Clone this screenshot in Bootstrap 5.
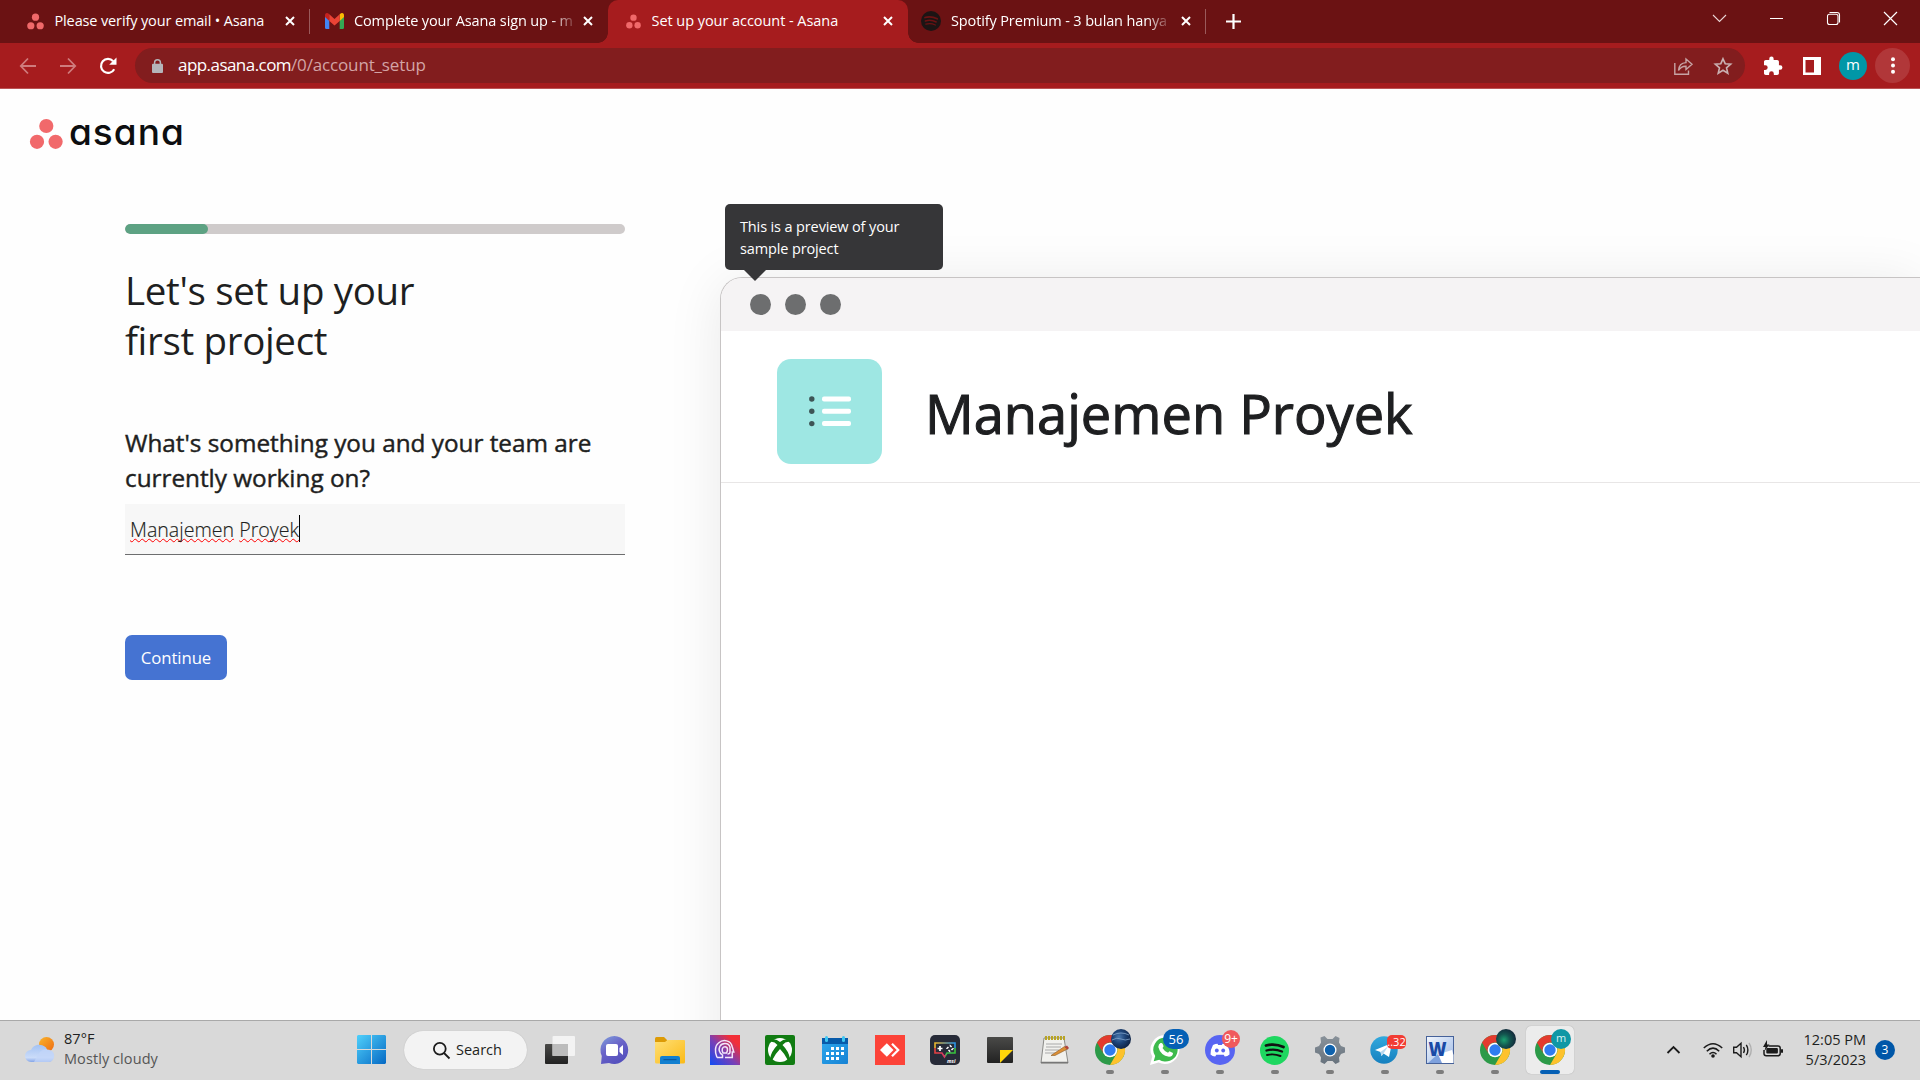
<!DOCTYPE html>
<html lang="en">
<head>
<meta charset="utf-8">
<title>Set up your account - Asana</title>
<link href="https://cdn.jsdelivr.net/npm/bootstrap@5.3.0/dist/css/bootstrap.min.css" rel="stylesheet">
<style>
html, body { height: 100%; }
body { width: 1920px; height: 1080px; overflow: hidden; font-family: "Open Sans", "Noto Sans", sans-serif; color: #1e1f21; background: #fefefe; }
svg { display: block; flex: none; overflow: visible; }
.tx { white-space: nowrap; }

/* browser chrome */
.tabstrip { height: 43px; background: #6b1213; color: #fff; font-size: 14.5px; }
.btab { height: 43px; flex: none; position: relative; }
.btab .ttl { line-height: 41.5px; height: 43px; overflow: hidden; white-space: nowrap; letter-spacing: -.13px; }
.btab.tab-on .ttl { letter-spacing: -.05px; }
.btab.fade-end .ttl { -webkit-mask-image: linear-gradient(90deg, #000 90%, transparent 102%); }
.tab-on { background: #a61c1e; border-radius: 10px 10px 0 0; }
.tab-on::before, .tab-on::after { content: ""; position: absolute; bottom: 0; width: 10px; height: 10px; }
.tab-on::before { left: -10px; background: radial-gradient(circle at 0 0, transparent 9.5px, #a61c1e 10px); }
.tab-on::after { right: -10px; background: radial-gradient(circle at 100% 0, transparent 9.5px, #a61c1e 10px); }
.tsep { width: 1px; height: 25px; margin-top: 9px; background: #9a5a5b; flex: none; }
.winctl { margin: 12px 23px 0 0; gap: 44px; }
.toolbar { height: 46px; background: #a61c1e; border-bottom: 1px solid #bb5455; }
.omni { width: 1610px; height: 35px; border-radius: 18px; background: #821d1e; color: #fff; font-size: 17px; }
.omni .addr { margin: -1px 0 0 15px; letter-spacing: -.55px; }
.omni .dim { color: #d3a4a5; letter-spacing: -.15px; }
.ava { width: 28px; height: 28px; border-radius: 50%; background: #0097a7; color: #fff; font-size: 15px; line-height: 25px; text-align: center; }
.menu-btn { width: 35px; height: 35px; border-radius: 50%; background: #b13739; }

/* page */
.stage { height: 931px; overflow: hidden; }
.side { width: 720px; flex: none; }
.logo { padding: 30px 0 0 30px; height: 135px; }
.word { font-family: Inter, sans-serif; font-feature-settings: "cv11"; font-weight: 500; font-size: 37px; line-height: 40px; letter-spacing: 1px; color: #0d0e10; margin: -7px 0 0 6px; }
.setup { width: 500px; margin-left: 125px; }
.setup .progress { height: 10px; background: #cfcbcb; border-radius: 5px; }
.setup .progress-bar { background: #5da283; border-radius: 5px; }
.setup h1 { font-size: 38.5px; line-height: 50px; font-weight: 400; letter-spacing: -.33px; margin: 31px 0 0; }
.setup label { font-size: 24.3px; line-height: 35px; font-weight: 400; -webkit-text-stroke: .45px; margin-top: 60px; }
.answer { height: 51px; background: #f7f7f7; border-bottom: 1px solid #6d6e6f; margin-top: 9px; padding: 12px 0 0 5px; font-size: 19.6px; line-height: 28px; font-weight: 300; -webkit-text-stroke: .15px; }
.misspelt { text-decoration: underline wavy #f00 1px; text-underline-offset: 1px; text-decoration-skip-ink: none; }
.caret { width: 1px; height: 27px; background: #000; margin-top: -1px; }
.go, .go:hover { margin-top: 80px; width: 102px; height: 45px; background: #4573d2; color: #fff; border: 0; border-radius: 7px; font-size: 16.8px; line-height: 46px; padding: 0; letter-spacing: -.1px; }
.preview { margin-top: 188px; height: 800px; border: 1px solid #c7c4c4; border-right: 0; border-radius: 22px 0 0 0; background: #fff; box-shadow: 0 5px 55px rgba(0,0,0,.085); }
.pbar { height: 53px; background: #f5f3f4; border-radius: 21px 0 0 0; padding-left: 28.5px; gap: 14px; }
.pdot { width: 21px; height: 21px; border-radius: 50%; background: #6d6e6f; }
.phead { height: 152px; border-bottom: 1px solid #e8e6e6; padding-left: 56px; }
.ptile { width: 105px; height: 105px; border-radius: 14px; background: #9ee7e3; margin-top: 10px; }
.pname { font-size: 54.2px; font-weight: 400; -webkit-text-stroke: 1.1px; line-height: 70px; margin: 12px 0 0 43px; }
.tip { position: absolute; left: 4px; top: -74px; width: 218px; height: 66px; background: #363638; border-radius: 5px; color: #fff; font-size: 14.5px; letter-spacing: -.13px; line-height: 22px; padding: 12px 0 0 15px; }
.tip::after { content: ""; position: absolute; left: 18px; top: 65px; border: 12px solid transparent; border-top: 12px solid #363638; border-bottom: 0; }

/* taskbar */
.taskbar { height: 60px; padding-bottom: 1px; background: #d9d9d9; border-top: 1px solid #a9a9a9; font-size: 14.5px; line-height: 20px; }
.pill { width: 123px; height: 38px; border-radius: 19px; background: #f3f3f3; box-shadow: 0 0 1px #aaa; }
.weather { margin: -2px 0 0 8px; width: 284px; letter-spacing: .08px; }
.clock { width: 83px; margin-top: -1px; }
.cell { width: 55px; height: 58px; position: relative; flex: none; }
.cell.run::after { content: ""; position: absolute; left: 23.5px; top: 49px; width: 8px; height: 4px; border-radius: 2px; background: #7d7d7d; }
.cell.live::before { content: ""; position: absolute; left: 3.5px; top: 5px; width: 48px; height: 48px; border-radius: 5px; background: #ececec; box-shadow: 0 0 1px #999; }
.cell.live::after { left: 17.5px; width: 20px; background: #0560b5; }
.cell svg { position: relative; }
.cell svg text, .bdg { font-family: "Open Sans", sans-serif; }
.bdg { width: 20px; height: 20px; border-radius: 50%; background: #0057a8; color: #fff; font-size: 12px; line-height: 19px; text-align: center; }
</style>
</head>
<body class="d-flex flex-column">

<svg width="0" height="0" class="position-absolute">
  <defs>
    <g id="asana"><circle cx="8" cy="3.9" r="3.4"/><circle cx="3.6" cy="12" r="3.4"/><circle cx="12.4" cy="12" r="3.4"/></g>
    <path id="xx" d="M1 1L9 9M9 1L1 9" stroke="#fff" stroke-width="2" fill="none"/>
    <g id="chrome">
      <circle cx="15" cy="15" r="15" fill="#2c9a48"/>
      <path d="M2 7.5A15 15 0 0 1 28 7.5H15A7.5 7.5 0 0 0 8.5 18.7Z" fill="#e33b2e"/>
      <path d="M28 7.5A15 15 0 0 1 15 30L21.5 18.7A7.5 7.5 0 0 0 15 7.5Z" fill="#fdc22c"/>
      <circle cx="15" cy="15" r="7.3" fill="#fff"/><circle cx="15" cy="15" r="5.7" fill="#2f7cf0"/>
    </g>
    <linearGradient id="gwin" x1="0" y1="0" x2="1" y2="1"><stop offset="0" stop-color="#4fd0fb"/><stop offset="1" stop-color="#0669c4"/></linearGradient>
    <linearGradient id="gsun" x1="0" y1="0" x2="1" y2="1"><stop offset="0" stop-color="#f9b52c"/><stop offset="1" stop-color="#ee6a12"/></linearGradient>
    <linearGradient id="gcl" x1="0" y1="0" x2="0" y2="1"><stop offset="0" stop-color="#a3c2f3"/><stop offset=".75" stop-color="#cbdcf9"/><stop offset="1" stop-color="#85a6e8"/></linearGradient>
    <linearGradient id="gdark" x1="0" y1="0" x2="0" y2="1"><stop offset="0" stop-color="#4a4a48"/><stop offset="1" stop-color="#222"/></linearGradient>
    <linearGradient id="gchat" x1="0" y1="0" x2=".6" y2="1"><stop offset="0" stop-color="#7fa0dc"/><stop offset=".5" stop-color="#6a63c8"/><stop offset="1" stop-color="#5450bd"/></linearGradient>
    <linearGradient id="gfold" x1="0" y1="0" x2="1" y2="1"><stop offset="0" stop-color="#ffdf75"/><stop offset="1" stop-color="#fbba16"/></linearGradient>
    <linearGradient id="ghead" x1="0" y1="1" x2="1" y2="0"><stop offset="0" stop-color="#0f4cf5"/><stop offset=".45" stop-color="#7a3fb5"/><stop offset=".8" stop-color="#f22f38"/></linearGradient>
    <linearGradient id="gcal" x1="0" y1="0" x2="1" y2="1"><stop offset="0" stop-color="#2ea9ee"/><stop offset="1" stop-color="#1682d4"/></linearGradient>
    <linearGradient id="gmsi" x1="0" y1="0" x2="1" y2="0"><stop offset="0" stop-color="#e5413f"/><stop offset=".5" stop-color="#d43a68"/><stop offset=".55" stop-color="#3ac04e"/><stop offset="1" stop-color="#38c23b"/></linearGradient>
    <linearGradient id="gmsit" x1="0" y1="0" x2="1" y2="0"><stop offset="0" stop-color="#ecb52c"/><stop offset="1" stop-color="#2794e8"/></linearGradient>
    <linearGradient id="gtg" x1="0" y1="0" x2="0" y2="1"><stop offset="0" stop-color="#32a9dd"/><stop offset="1" stop-color="#1580bf"/></linearGradient>
    <linearGradient id="gset" x1="0" y1="-15" x2="0" y2="15" gradientUnits="userSpaceOnUse"><stop offset="0" stop-color="#8a939b"/><stop offset="1" stop-color="#66717c"/></linearGradient>
    <linearGradient id="gword" x1="0" y1="0" x2="1" y2="1"><stop offset="0" stop-color="#f3f7fd"/><stop offset="1" stop-color="#9db9e6"/></linearGradient>
    <radialGradient id="gaur" cx=".4" cy=".55" r=".6"><stop offset="0" stop-color="#1ba070"/><stop offset=".5" stop-color="#13554f"/><stop offset="1" stop-color="#12283a"/></radialGradient>
    <radialGradient id="gsea" cx=".4" cy=".4" r=".7"><stop offset="0" stop-color="#4a79b0"/><stop offset=".45" stop-color="#1c4377"/><stop offset="1" stop-color="#0b1b38"/></radialGradient>
  </defs>
</svg>

<!-- tab strip -->
<header class="tabstrip d-flex flex-shrink-0">
  <div class="btab d-flex" style="width:309px">
    <svg width="17" height="17" viewBox="0 0 16 16" fill="#f0696a" style="margin:13px 11px 0 26.5px"><use href="#asana"/></svg>
    <div class="ttl" style="width:229px">Please verify your email • Asana</div>
    <svg width="10" height="10" style="margin:16px 0 0 1.5px"><use href="#xx"/></svg>
  </div>
  <div class="tsep"></div>
  <div class="btab fade-end d-flex" style="width:298px">
    <svg width="19" height="16" viewBox="0 0 19 14" preserveAspectRatio="none" style="margin:13px 10px 0 15px"><path d="M0 2V13Q0 14 1 14H4.3V5.5Z" fill="#4285f4"/><path d="M19 2V13Q19 14 18 14H14.7V5.5Z" fill="#34a853"/><path d="M14.7 1.2V7L19 3.6V2A2 2 0 0 0 16 .3Z" fill="#fbbc04"/><path d="M4.3 1.2V7L0 3.6V2A2 2 0 0 1 3 .3Z" fill="#c5221f"/><path d="M4.3 1.2L9.5 5.2L14.7 1.2V7L9.5 11L4.3 7Z" fill="#ea4335"/></svg>
    <div class="ttl" style="width:220px">Complete your Asana sign up - m</div>
    <svg width="10" height="10" style="margin:16px 0 0 9px"><use href="#xx"/></svg>
  </div>
  <div class="btab tab-on d-flex" style="width:299.500px">
    <svg width="15" height="15" viewBox="0 0 16 16" fill="#f0696a" style="margin:14px 11px 0 17.500px"><use href="#asana"/></svg>
    <div class="ttl" style="width:225px">Set up your account - Asana</div>
    <svg width="10" height="10" style="margin:16px 0 0 6px"><use href="#xx"/></svg>
  </div>
  <div class="btab fade-end d-flex" style="width:297.500px">
    <svg width="20" height="20" style="margin:11px 10px 0 13.500px" fill="none" stroke="#6b1213" stroke-linecap="round"><circle cx="10" cy="10" r="10" fill="#1c1414" stroke="none"/><path d="M4 6.500Q10 4.600 16.200 7.800" stroke-width="1.800"/><path d="M4.400 10Q10 8.300 15.200 11" stroke-width="1.500"/><path d="M4.800 13.200Q9.800 11.900 14.300 14" stroke-width="1.300"/></svg>
    <div class="ttl" style="width:217px">Spotify Premium - 3 bulan hanya</div>
    <svg width="10" height="10" style="margin:16px 0 0 13px"><use href="#xx"/></svg>
  </div>
  <div class="tsep"></div>
  <svg width="15" height="15" style="margin:14px 0 0 20px" stroke="#fff" stroke-width="2.200"><path d="M7.500 0V15M0 7.500H15"/></svg>
  <div class="winctl ms-auto d-flex">
    <svg width="13" height="13" fill="none" stroke="#ead6d6" stroke-width="1.100"><path d="M0 3L6.500 9.500L13 3"/></svg>
    <svg width="13" height="13" stroke="#fff"><path d="M0 6.500H13"/></svg>
    <svg width="13" height="13" fill="none" stroke="#fff" stroke-width="1.100"><rect x=".5" y="2.300" width="10.500" height="10.200" rx="2"/><path d="M2.500 .5H10A2.500 2.500 0 0 1 12.500 3V10.500"/></svg>
    <svg width="13" height="13" stroke="#fff" stroke-width="1.200"><path d="M0 0L13 13M13 0L0 13"/></svg>
  </div>
</header>

<!-- toolbar -->
<nav class="toolbar d-flex align-items-center flex-shrink-0">
  <svg width="16" height="16" style="margin-left:19.500px" fill="none" stroke="#cf7c7d" stroke-width="1.800"><path d="M16 8H1M8 .5L.8 8L8 15.500"/></svg>
  <svg width="16" height="16" style="margin-left:24px" fill="none" stroke="#cf7c7d" stroke-width="1.800"><path d="M0 8H15M8 .5L15.200 8L8 15.500"/></svg>
  <svg width="18" height="18" style="margin-left:23.500px" viewBox="0 0 18 18"><path d="M15.200 12.200A7 7 0 1 1 14.200 4.200" fill="none" stroke="#fff" stroke-width="2.200"/><path d="M17.500 .5V7.800H10.200Z" fill="#fff"/></svg>
  <div class="omni d-flex align-items-center" style="margin-left:18px">
    <svg width="11" height="14" style="margin-left:17px"><rect y="4.800" width="11" height="9.200" rx="1" fill="#b5b5ba"/><path d="M2.600 5.500V3.600A2.900 2.900 0 0 1 8.400 3.600V5.500" fill="none" stroke="#b5b5ba" stroke-width="1.500"/></svg>
    <span class="addr tx">app.asana.com<span class="dim">/0/account_setup</span></span>
    <svg class="ms-auto" width="19" height="18" fill="none" stroke="#c6a3a4" stroke-width="1.400"><path d="M.8 6V17.200H14.500V13.500"/><path d="M4.500 13.500Q5 6 12 5.600V2L18 7.300L12 12.500V9.200Q7 9 4.500 13.500Z"/></svg>
    <svg width="18" height="18" viewBox="0 0 18 18" style="margin:0 13.500px 0 20.500px" fill="none" stroke="#c9b0b1" stroke-width="1.600"><path d="M9 1.800L11.200 6.700L16.700 7.200L12.500 10.800L13.800 16.200L9 13.300L4.200 16.200L5.500 10.800L1.300 7.200L6.800 6.700Z"/></svg>
  </div>
  <svg width="18" height="18" viewBox="2 1.500 20.500 20.500" style="margin-left:19px" fill="#fff"><path d="M20.500 11H19V7c0-1.100-.9-2-2-2h-4V3.500a2.500 2.500 0 0 0-5 0V5H4c-1.100 0-2 .9-2 2v3.800h1.500a2.700 2.700 0 0 1 0 5.400H2V20c0 1.100.9 2 2 2h3.800v-1.500a2.700 2.700 0 0 1 5.400 0V22H17c1.100 0 2-.9 2-2v-4h1.500a2.500 2.500 0 0 0 0-5z"/></svg>
  <svg width="18" height="18" style="margin-left:21px"><path fill="#fff" fill-rule="evenodd" d="M0 0H18V18H0ZM2.500 3V15.500H11V3Z"/></svg>
  <div class="ava" style="margin-left:18px">m</div>
  <div class="menu-btn d-flex align-items-center justify-content-center" style="margin-left:8px"><svg width="4" height="17" fill="#fff"><circle cx="2" cy="2.200" r="2"/><circle cx="2" cy="8.500" r="2"/><circle cx="2" cy="14.800" r="2"/></svg></div>
</nav>

<!-- page -->
<main class="stage d-flex flex-shrink-0">
  <section class="side">
    <div class="logo d-flex">
      <svg width="33" height="31" fill="#f1696b"><circle cx="16.300" cy="7" r="7.100"/><circle cx="7" cy="22.800" r="7.100"/><circle cx="25.600" cy="22.800" r="7.100"/></svg>
      <span class="word">asana</span>
    </div>
    <div class="setup">
      <div class="progress"><div class="progress-bar" style="width:16.6%"></div></div>
      <h1>Let's set up your<br>first project</h1>
      <label class="d-block">What's something you and your team are<br>currently working on?</label>
      <div class="answer d-flex"><span class="tx"><span class="misspelt">Manajemen</span> <span class="misspelt">Proyek</span></span><span class="caret"></span></div>
      <button class="btn go" type="button">Continue</button>
    </div>
  </section>
  <section class="preview position-relative flex-grow-1">
    <div class="pbar d-flex align-items-center"><span class="pdot"></span><span class="pdot"></span><span class="pdot"></span></div>
    <div class="phead d-flex align-items-center">
      <div class="ptile d-flex align-items-center justify-content-center">
        <svg width="42" height="32"><g fill="#3d5455"><circle cx="2.800" cy="3" r="2.700"/><circle cx="2.800" cy="15.300" r="2.700"/><circle cx="2.800" cy="27.600" r="2.700"/></g><g fill="#fff"><rect x="13" y=".5" width="29" height="5" rx="2"/><rect x="13" y="12.800" width="29" height="5" rx="2"/><rect x="13" y="25" width="29" height="5" rx="2"/></g></svg>
      </div>
      <div class="pname tx">Manajemen Proyek</div>
    </div>
    <div class="tip">This is a preview of your<br>sample project</div>
  </section>
</main>

<!-- taskbar -->
<footer class="taskbar d-flex align-items-center flex-shrink-0">
  <svg width="31" height="26" style="margin-left:25px"><circle cx="21.500" cy="7.500" r="7.500" fill="url(#gsun)"/><path d="M6 25A6 6 0 0 1 6 13A9 8.500 0 0 1 21 10.500Q22 12 22 13A6 6 0 0 1 24 25Z" fill="url(#gcl)"/><path d="M13 17.500Q17 11.500 23 12.500A6.300 6.300 0 0 1 24 25H9Z" fill="#c3d6f8" opacity=".75"/></svg>
  <div class="weather">87°F<br><span style="color:#555">Mostly cloudy</span></div>
  <svg width="30" height="30" style="margin-left:9px" fill="url(#gwin)"><path d="M1 0H14V14H0V1ZM15 0H28L29 1V14H15ZM0 15H14V29H1L0 28ZM15 15H29V28L28 29H15Z"/></svg>
  <div class="pill d-flex align-items-center" style="margin-left:17px">
    <svg width="17" height="17" style="margin-left:29px" fill="none" stroke="#1b1b1b" stroke-width="1.800"><circle cx="6.800" cy="6.800" r="5.900"/><path d="M11 11L16.500 16.500"/></svg>
    <span class="tx" style="margin-left:6px">Search</span>
  </div>
  <div class="d-flex" style="margin-left:5px">
    <div class="cell d-flex align-items-center justify-content-center"><svg width="30" height="28"><rect y="8" width="23" height="20" rx="1" fill="url(#gdark)"/><rect x="7.500" width="22.500" height="20" rx="1" fill="#f7f7f7" opacity=".85"/><rect x="7.500" y="8" width="15.500" height="12" fill="#bcbcbc"/></svg></div>
    <div class="cell d-flex align-items-center justify-content-center"><svg width="29" height="28"><path d="M14.500 0A14 14 0 1 1 9 27L1 28L1.800 20A14 14 0 0 1 14.500 0Z" fill="url(#gchat)"/><rect x="6" y="8" width="12" height="12" rx="2" fill="#fff"/><path d="M19.500 12L23 9V19L19.500 16Z" fill="#fff"/></svg></div>
    <div class="cell d-flex align-items-center justify-content-center"><svg width="30" height="27"><path d="M0 1.500Q0 0 1.500 0H9L12 3V8H0Z" fill="#dd9b06"/><path d="M0 5H10L12.500 3H29Q30 3 30 4V25Q30 26.500 28.500 26.500H1.500Q0 26.500 0 25Z" fill="url(#gfold)"/><path d="M5 27V21Q5 19 7 19H23Q25 19 25 21V27Z" fill="#127fd0"/><path d="M8.500 22.700H21.500" stroke="#0a4f94"/></svg></div>
    <div class="cell d-flex align-items-center justify-content-center"><svg width="30" height="30"><path d="M0 0H30V30H0Z" fill="url(#ghead)"/><g fill="none" stroke="#f3e6fa" stroke-width="1.500"><path d="M7 22.500H12.500V20C9.500 18 8.500 14.500 9.800 11.500C12 7.500 18.500 7.500 20 12L20 17Q20 19 17.500 19"/><path d="M7 22.500C4.500 17 5 10.500 8.500 8C13 4 21 5 22.300 12L23.800 17H22.300V22.500H15"/><path d="M13 18C11.500 15 12 11.800 15 11.800S18 15.500 16.500 18Z"/></g></svg></div>
    <div class="cell d-flex align-items-center justify-content-center"><svg width="30" height="30"><rect width="30" height="30" rx="2" fill="#117c12"/><circle cx="15" cy="15" r="12" fill="#fff"/><path d="M7 4.500Q11 3.500 15 7Q19 3.500 23 4.500L25 7Q21 6 17.500 10Q24 16.500 25 24L23 25.500Q20 19 15 14Q10 19 7 25.500L5 24Q6 16.500 12.500 10Q9 6 5 7Z" fill="#117c12"/></svg></div>
    <div class="cell d-flex align-items-center justify-content-center"><svg width="26" height="28"><path d="M0 2H26V27Q26 28 25 28H1Q0 28 0 27Z" fill="url(#gcal)"/><path d="M0 2H26V8H0Z" fill="#075aa9"/><g fill="#3cc6f3"><rect x="3" y="0" width="3" height="6" rx="1.500"/><rect x="20" y="0" width="3" height="6" rx="1.500"/></g><path fill="#fff" d="M9 11h3v3H9ZM14 11h3v3h-3ZM19 11h3v3h-3ZM4 16h3v3H4ZM9 16h3v3H9ZM14 16h3v3h-3ZM19 16h3v3h-3ZM4 21h3v3H4ZM9 21h3v3H9ZM14 21h3v3h-3Z"/></svg></div>
    <div class="cell d-flex align-items-center justify-content-center"><svg width="30" height="30"><rect width="30" height="30" fill="#fc4338"/><path d="M5 15L11.800 8.300L18.500 15L11.800 21.700Z" fill="#fff"/><path d="M17 8.800L23.200 15L17 21.200" fill="none" stroke="#fff" stroke-width="2.200"/></svg></div>
    <div class="cell d-flex align-items-center justify-content-center"><svg width="30" height="30"><rect width="30" height="30" rx="5" fill="#272b38"/><path d="M5 13V8H25V13" fill="none" stroke="url(#gmsit)" stroke-width="1.600"/><path d="M5 13V18H12L14.500 22L17 18H25V13" fill="none" stroke="url(#gmsi)" stroke-width="1.600"/><path d="M10 11V16M7.500 13.500H12.500" stroke="#fff" stroke-width="1.700"/><path d="M20 10.500L23 13.500L20 16.500L17 13.500Z" fill="none" stroke="#fff" stroke-width="1.500" stroke-dasharray="2.200 2"/><text x="17" y="28" font-size="5" font-weight="700" font-style="italic" fill="#fff">msi</text></svg></div>
    <div class="cell d-flex align-items-center justify-content-center"><svg width="26" height="26"><rect width="26" height="26" rx="1" fill="url(#gdark)"/><path d="M13 13H26L13 26Z" fill="#ffd60a"/></svg></div>
    <div class="cell d-flex align-items-center justify-content-center"><svg width="28" height="28"><path d="M3 2H23L27 27H0Z" fill="#f1f1ee" stroke="#8b8b88"/><path d="M0 26.500H27" stroke="#777" stroke-width="1.500"/><path d="M4 2H24" stroke="#b8a427" stroke-width="4" stroke-dasharray="2 1"/><path d="M5 8H21M5 11H20M4 14H18M4 17H14" stroke="#a9a9a9"/><path d="M10 19.500L23.500 10.500L26.500 13L14 19.500Z" fill="#dc8f35" stroke="#8a5a25" stroke-width=".6"/><path d="M23.500 11L26.500 13.500L28 12L26 9.500Z" fill="#b2443b"/></svg></div>
    <div class="cell run d-flex align-items-center justify-content-center"><svg width="30" height="30"><use href="#chrome"/><circle cx="26" cy="4" r="10" fill="url(#gsea)"/><path d="M18 0Q26 -4 34 0M17 5Q22 2 26 4T35 4" fill="none" stroke="#8fb0d6" stroke-width="1" opacity=".7"/></svg></div>
    <div class="cell run d-flex align-items-center justify-content-center"><svg width="30" height="30"><path d="M15.500 0A14.500 14.500 0 1 1 8.500 27.500L0 30L2.300 21.500A14.500 14.500 0 0 1 15.500 0Z" fill="#fff"/><path d="M15.500 2.600A12 12 0 1 1 9.200 24.700L3.700 26.300L5.200 21A12 12 0 0 1 15.500 2.600Z" fill="#3dbb4c"/><path d="M10.500 8Q12 7.500 12.700 9L13.500 11Q13.500 12 12.500 13Q14.500 16.500 18 17.800L19.500 16.200L23 18Q23 21.500 19 21.800Q10.500 20.500 8.300 12Q8.500 9 10.500 8Z" fill="#fff"/><rect x="13" y="-6" width="26" height="20" rx="10" fill="#0560b5"/><text x="26" y="8.700" font-size="13" text-anchor="middle" fill="#fff">56</text></svg></div>
    <div class="cell run d-flex align-items-center justify-content-center"><svg width="30" height="30"><circle cx="15" cy="15" r="15" fill="#5865f2"/><path d="M8 10Q10.500 8.700 12.500 8.700L13.200 10H16.800L17.500 8.700Q20 8.900 22 10Q25 15 24.500 19.500Q22.500 21.500 19.800 21.500L18.700 19.800H11.300L10.200 21.500Q7.500 21.500 5.500 19.500Q5.200 15 8 10Z" fill="#fff"/><circle cx="11.800" cy="15.500" r="1.900" fill="#5865f2"/><circle cx="18.200" cy="15.500" r="1.900" fill="#5865f2"/><circle cx="26" cy="4" r="9" fill="#f05a5c"/><text x="26" y="8.200" font-size="12" text-anchor="middle" fill="#fff">9+</text></svg></div>
    <div class="cell run d-flex align-items-center justify-content-center"><svg width="29" height="29"><circle cx="14.500" cy="14.500" r="14.500" fill="#1ed760"/><g fill="none" stroke="#111" stroke-linecap="round"><path d="M6 9.500Q15 7 23.500 11" stroke-width="2.800"/><path d="M6.500 14.500Q14.500 12.300 22 15.500" stroke-width="2.300"/><path d="M7 19Q14 17.300 20.500 20" stroke-width="1.900"/></g></svg></div>
    <div class="cell run d-flex align-items-center justify-content-center"><svg width="30" height="30" viewBox="-15 -15 30 30"><path d="M-9.500 -12.500L-5.500 -14L-2.500 -11H2.500L5.500 -14L9.500 -12L9 -7.500L11 -4L15 -2.500V2.500L11 4L9 7.500L9.500 12L5.500 14L2.500 11H-2.500L-5.500 14L-9.500 12L-9 7.500L-11 4L-15 2.500V-2.500L-11 -4L-9 -7.500Z" fill="url(#gset)"/><circle r="6.500" fill="#fff"/><circle r="5.200" fill="#0f62ad"/></svg></div>
    <div class="cell run d-flex align-items-center justify-content-center"><svg width="30" height="28"><circle cx="14" cy="14" r="13.700" fill="url(#gtg)"/><path d="M5 14L22 7L19 21L13.500 17.500L11.500 20L10.500 16Z" fill="#fff"/><path d="M10.500 16L18 10.500L13.500 17.500L11.500 20Z" fill="#b9d8ee"/><rect x="17" y="-1" width="19" height="14" rx="5" fill="#f23c34"/><text x="26.500" y="10" font-size="11" text-anchor="middle" fill="#fff">..32</text></svg></div>
    <div class="cell run d-flex align-items-center justify-content-center"><svg width="28" height="28"><rect x=".5" y=".5" width="27" height="27" fill="url(#gword)" stroke="#46629a"/><path d="M10 19L26 14L27.500 19V27H13Z" fill="#fff"/><path d="M2 27L12 18L16 27Z" fill="#7ea1dd"/><text x="2.500" y="20" font-size="20" font-weight="800" textLength="18" lengthAdjust="spacingAndGlyphs" fill="#1a4aa6">W</text></svg></div>
    <div class="cell run d-flex align-items-center justify-content-center"><svg width="30" height="30"><use href="#chrome"/><circle cx="26" cy="4" r="10" fill="url(#gaur)"/></svg></div>
    <div class="cell run live d-flex align-items-center justify-content-center"><svg width="30" height="30"><use href="#chrome"/><circle cx="26" cy="4" r="10" fill="#0f97a5"/><text x="26" y="7" font-size="11" text-anchor="middle" fill="#d8f2f4">m</text></svg></div>
  </div>
  <div class="ms-auto d-flex align-items-center" style="margin-right:25px">
    <svg width="13" height="8" fill="none" stroke="#1b1b1b" stroke-width="1.800"><path d="M.5 7L6.500 1L12.500 7"/></svg>
    <svg width="20" height="15" style="margin-left:23px" fill="none" stroke="#1b1b1b" stroke-width="1.600"><path d="M.8 5Q10 -3.500 19.200 5"/><path d="M3.800 8.200Q10 2.200 16.200 8.200"/><path d="M6.500 11.200Q10 7.800 13.500 11.200"/><circle cx="10" cy="13" r="1.800" fill="#1b1b1b" stroke="none"/></svg>
    <svg width="20" height="16" style="margin-left:10px" fill="none" stroke="#1b1b1b" stroke-width="1.400"><path d="M.7 5.200H3.500L8 1.200V14.800L3.500 10.800H.7Z"/><path d="M10.500 5Q12.300 8 10.500 11"/><path d="M13.300 2.800Q16.500 8 13.300 13.200"/><path d="M16 .8Q20.500 8 16 15.200" stroke="#b0b0b0"/></svg>
    <svg width="20" height="16" style="margin-left:10px"><path d="M5.500 4H15Q17.200 4 17.200 6.200V11.500Q17.200 13.700 15 13.700H3.200Q1 13.700 1 11.500V8" fill="none" stroke="#1b1b1b" stroke-width="1.500"/><rect x="3.300" y="6" width="11.600" height="5.600" rx="1" fill="#1b1b1b"/><path d="M4 -2L0 5H2.500L1.500 9L6.500 2.500H4Z" fill="#1b1b1b"/><rect x="18" y="7" width="2" height="4" rx="1" fill="#1b1b1b"/></svg>
    <div class="clock text-end">12:05 PM<br>5/3/2023</div>
    <div class="bdg" style="margin-left:9px">3</div>
  </div>
</footer>
<script src="https://cdn.jsdelivr.net/npm/bootstrap@5.3.0/dist/js/bootstrap.bundle.min.js"></script>
</body>
</html>
